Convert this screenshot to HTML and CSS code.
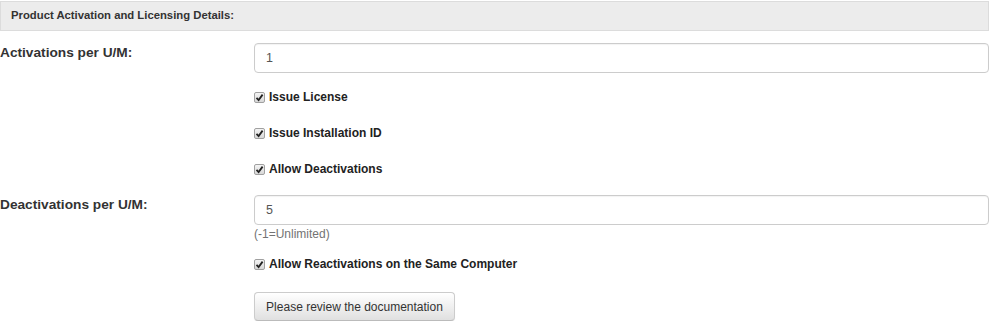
FILE: index.html
```html
<!DOCTYPE html>
<html lang="en">
<head>
  <meta charset="UTF-8" />
  <title>Product Activation and Licensing Details</title>
  <link rel="stylesheet" href="styles.css">
</head>
<body>
  <div class="panel">
    <div class="panel-heading">Product Activation and Licensing Details:</div>

    <div class="form-row first">
      <label class="row-label">Activations per U/M:</label>
      <div class="field">
        <input type="text" class="form-control" value="1">

        <div class="check first-check">
          <span class="box"><svg width="9" height="9" viewBox="0 0 9 9"><path d="M1.5 4.8 L3.6 7 L7.6 1.6" fill="none" stroke="#222" stroke-width="1.8"/></svg></span>
          <span>Issue License</span>
        </div>
        <div class="check">
          <span class="box"><svg width="9" height="9" viewBox="0 0 9 9"><path d="M1.5 4.8 L3.6 7 L7.6 1.6" fill="none" stroke="#222" stroke-width="1.8"/></svg></span>
          <span>Issue Installation ID</span>
        </div>
        <div class="check">
          <span class="box"><svg width="9" height="9" viewBox="0 0 9 9"><path d="M1.5 4.8 L3.6 7 L7.6 1.6" fill="none" stroke="#222" stroke-width="1.8"/></svg></span>
          <span>Allow Deactivations</span>
        </div>
      </div>
    </div>

    <div class="form-row second">
      <label class="row-label">Deactivations per U/M:</label>
      <div class="field">
        <input type="text" class="form-control" value="5">
        <div class="help-block">(-1=Unlimited)</div>

        <div class="check react-check">
          <span class="box"><svg width="9" height="9" viewBox="0 0 9 9"><path d="M1.5 4.8 L3.6 7 L7.6 1.6" fill="none" stroke="#222" stroke-width="1.8"/></svg></span>
          <span>Allow Reactivations on the Same Computer</span>
        </div>

        <button type="button" class="btn">Please review the documentation</button>
      </div>
    </div>
  </div>
</body>
</html>
```

FILE: styles.css
```css
body {
  margin: 0;
  font-family: "Liberation Sans", Arial, sans-serif;
  font-size: 12px;
  line-height: 18px;
  color: #333;
  background: #fff;
}

.panel {
  width: 989px;
  padding-top: 1px;
}

.panel-heading {
  height: 28px;
  line-height: 27px;
  padding-left: 10px;
  background-color: #ececec;
  border: 1px solid #dcdcdc;
  font-size: 11.3px;
  font-weight: bold;
  color: #333;
}

.form-row {
  display: flex;
}

.form-row.first {
  margin-top: 12px;
}

.form-row.second {
  margin-top: 17px;
}

.row-label {
  width: 254px;
  flex-shrink: 0;
  font-size: 13.7px;
  font-weight: bold;
  color: #333;
  padding-top: 1px;
}

.field {
  flex: 1;
}

.form-control {
  display: block;
  box-sizing: border-box;
  width: 100%;
  height: 30px;
  padding: 5px 11px;
  font-family: inherit;
  font-size: 12.5px;
  color: #555;
  border: 1px solid #ccc;
  border-radius: 4px;
  box-shadow: inset 0 1px 1px rgba(0,0,0,0.05);
  outline: none;
}

.check {
  display: flex;
  align-items: center;
  gap: 4px;
  height: 18px;
  margin-top: 18px;
  font-weight: bold;
  color: #222;
}

.check.first-check {
  margin-top: 15px;
}

.check.react-check {
  margin-top: 12px;
}

.box {
  box-sizing: border-box;
  width: 11px;
  height: 11px;
  border: 1px solid #a0a0a0;
  border-radius: 2px;
  background: linear-gradient(#f4f4f4, #d8d8d8);
  display: flex;
  align-items: center;
  justify-content: center;
  margin-top: 1px;
}

.help-block {
  margin-top: 0;
  color: #737373;
}

.btn {
  display: block;
  margin-top: 19px;
  height: 29px;
  width: 201px;
  padding: 0;
  font-family: inherit;
  font-size: 12px;
  color: #333;
  text-align: center;
  white-space: nowrap;
  background-image: linear-gradient(#fff, #e0e0e0);
  border: 1px solid #ccc;
  border-bottom-color: #bbb;
  border-radius: 4px;
  box-shadow: 0 1px 1px rgba(0,0,0,0.05);
  cursor: pointer;
}
```
